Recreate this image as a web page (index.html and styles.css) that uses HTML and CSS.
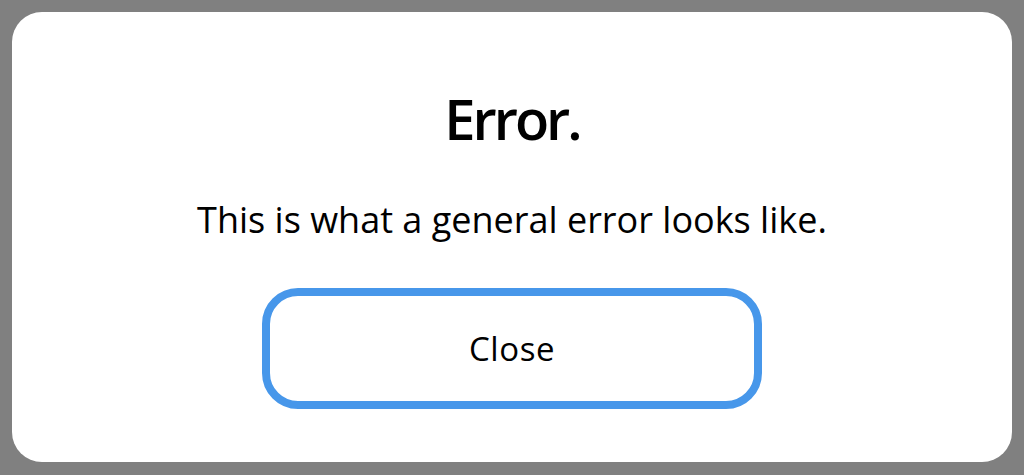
FILE: index.html
```html
<!DOCTYPE html>
<html>
<head>
<meta charset="utf-8">
<link rel="stylesheet" href="styles.css">
</head>
<body>
<div class="modal">
  <h1 class="title">Error.</h1>
  <p class="message">This is what a general error looks like.</p>
  <button class="close-btn">Close</button>
</div>
</body>
</html>
```
FILE: styles.css
```css
html, body {
  margin: 0;
  padding: 0;
  width: 1024px;
  height: 475px;
  background: #808080;
  overflow: hidden;
}
body {
  padding: 12px;
  box-sizing: border-box;
  font-family: "Open Sans", "Liberation Sans", sans-serif;
  color: #000;
}
.modal {
  width: 1000px;
  height: 450px;
  background: #fff;
  border-radius: 30px;
  display: flex;
  flex-direction: column;
  align-items: center;
  box-sizing: border-box;
  padding-top: 74px;
}
.title {
  margin: 0;
  font-size: 56px;
  font-weight: 600;
  line-height: 64px;
  letter-spacing: -3px;
}
.message {
  margin: 48px 0 0;
  font-size: 36px;
  font-weight: 500;
  line-height: 44px;
  letter-spacing: 0;
}
.close-btn {
  margin-top: 46px;
  width: 500px;
  height: 121px;
  border: 8px solid #4797ea;
  border-radius: 36px;
  background: #fff;
  font-family: inherit;
  font-size: 33px;
  font-weight: 500;
  letter-spacing: 0.6px;
  color: #000;
  padding: 0;
}
```
